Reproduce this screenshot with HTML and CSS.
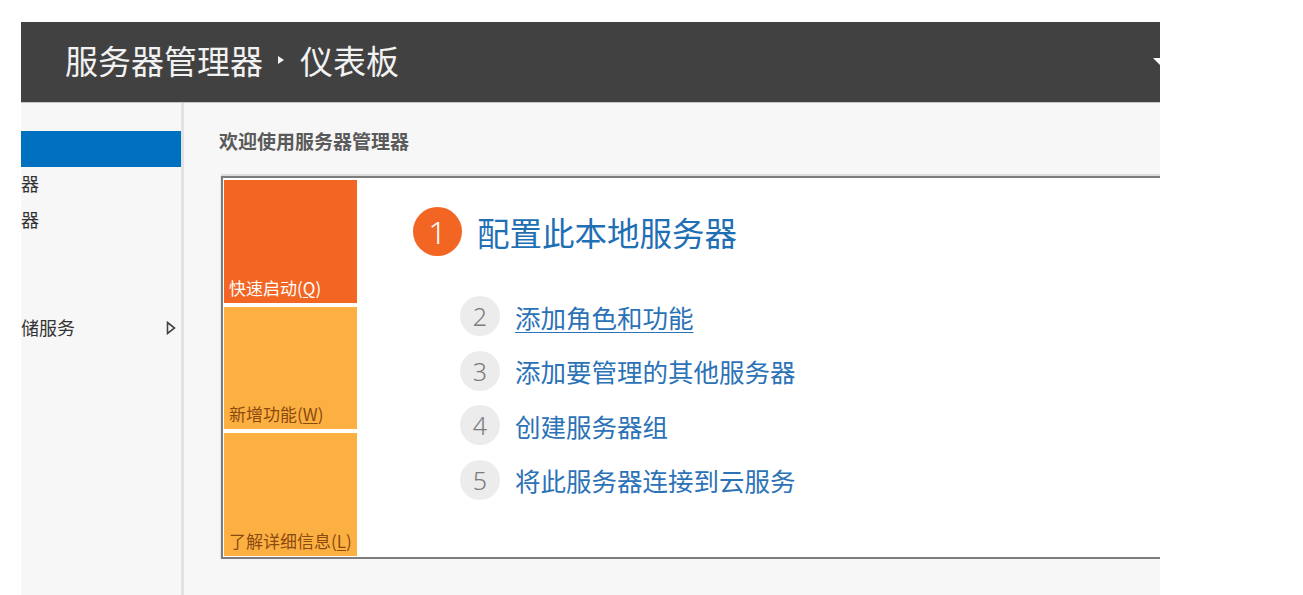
FILE: index.html
```html
<!DOCTYPE html>
<html lang="zh-CN">
<head>
    <meta charset="UTF-8">
    <meta name="viewport" content="width=device-width, initial-scale=1.0">
    <title>服务器管理器 - 仪表板</title>
    <link rel="stylesheet" href="styles.css">
</head>
<body>

<div class="app">
    <!-- Title bar -->
    <div class="header">
        <h1 class="title">
            服务器管理器
            <svg class="crumb-arrow" width="8" height="10" viewBox="0 0 8 10"><path d="M1 1 L7 5 L1 9 Z" fill="#f2f2f2"/></svg>
            仪表板
        </h1>
        <svg class="header-menu" width="14" height="8" viewBox="0 0 14 8"><path d="M0 0 L14 0 L7 7 Z" fill="#ffffff"/></svg>
    </div>

    <div class="body">
        <!-- Navigation -->
        <div class="sidebar">
            <ul class="nav">
                <li class="nav-item active">仪表板</li>
                <li class="nav-item">本地服务器</li>
                <li class="nav-item">所有服务器</li>
                <li class="nav-item">DNS</li>
                <li class="nav-item">IIS</li>
                <li class="nav-item">
                    文件和存储服务
                    <svg class="nav-arrow" width="10" height="14" viewBox="0 0 10 14"><path d="M1.5 1.5 L8.5 7 L1.5 12.5 Z" fill="none" stroke="#444" stroke-width="1.6"/></svg>
                </li>
            </ul>
        </div>

        <!-- Dashboard -->
        <div class="content">
            <h3 class="welcome">欢迎使用服务器管理器</h3>

            <div class="panel">
                <div class="tiles">
                    <div class="tile tile-start">快速启动(<u>Q</u>)</div>
                    <div class="tile tile-new">新增功能(<u>W</u>)</div>
                    <div class="tile tile-learn">了解详细信息(<u>L</u>)</div>
                </div>

                <div class="steps">
                    <div class="step-main">
                        <span class="num num-main">1</span>
                        <span class="step-title">配置此本地服务器</span>
                    </div>
                    <div class="sub-steps">
                        <div class="step">
                            <span class="num">2</span>
                            <a class="step-link underline">添加角色和功能</a>
                        </div>
                        <div class="step">
                            <span class="num">3</span>
                            <a class="step-link">添加要管理的其他服务器</a>
                        </div>
                        <div class="step">
                            <span class="num">4</span>
                            <a class="step-link">创建服务器组</a>
                        </div>
                        <div class="step">
                            <span class="num">5</span>
                            <a class="step-link">将此服务器连接到云服务</a>
                        </div>
                    </div>
                </div>
            </div>
        </div>
    </div>
</div>

</body>
</html>
```

FILE: styles.css
```css
/* Page */
body {
    margin: 0;
    background-color: #ffffff;
    font-family: "Noto Sans CJK SC", "Noto Sans", sans-serif;
}
.app {
    margin: 22px 0 0 21px;
    width: 1139px;
    height: 573px;
    overflow: hidden;
    display: flex;
    flex-direction: column;
}

/* Header */
.header {
    height: 80px;
    flex-shrink: 0;
    background-color: #414141;
    border-bottom: 1px solid #c4c4c4;
    display: flex;
    align-items: center;
    position: relative;
}
.title {
    margin: 0 0 4px 44px;
    color: #f2f2f2;
    font-size: 33px;
    font-weight: normal;
    display: flex;
    align-items: center;
}
.crumb-arrow {
    margin: 0 15px 0 14px;
}
.header-menu {
    position: absolute;
    right: -7px;
    top: 36px;
}

/* Body */
.body {
    flex: 1;
    display: flex;
    background-color: #f7f7f7;
}

/* Sidebar */
.sidebar {
    width: 160px;
    flex-shrink: 0;
    border-right: 3px solid #e2e2e2;
    overflow: hidden;
    padding-top: 28px;
}
.nav {
    list-style: none;
    margin: 0 0 0 -72px;
    padding: 0;
}
.nav-item {
    height: 36px;
    line-height: 32px;
    font-size: 18px;
    color: #333333;
    white-space: nowrap;
    position: relative;
}
.nav-item.active {
    background-color: #0070c0;
    color: #ffffff;
}
.nav-arrow {
    position: absolute;
    left: 217px;
    top: 10px;
}

/* Content */
.content {
    flex: 1;
    padding: 0 0 0 35px;
}
.welcome {
    margin: 0;
    padding-top: 24px;
    height: 49px;
    font-size: 19px;
    font-weight: bold;
    color: #5a5a5a;
}
.panel {
    margin-left: 2px;
    background-color: #ffffff;
    border: 2px solid #7c7c7c;
    border-right: none;
    box-shadow: 0 -2px 0 #dddddd, -1px 0 0 #e6e6e6;
    padding: 2px 0 1px 1px;
    display: flex;
    height: 376px;
}

/* Tiles */
.tiles {
    width: 133px;
    display: flex;
    flex-direction: column;
    gap: 4px;
}
.tile {
    height: 123px;
    box-sizing: border-box;
    padding: 0 0 3px 5px;
    display: flex;
    align-items: flex-end;
    font-size: 17px;
    color: #8a4a10;
}
.tile u {
    text-underline-offset: 2px;
}
.tile-start {
    background-color: #f26522;
    color: #ffffff;
}
.tile-new,
.tile-learn {
    background-color: #fdb042;
}

/* Steps */
.steps {
    padding: 27px 0 0 56px;
}
.step-main {
    display: flex;
    align-items: center;
    gap: 15px;
}
.num {
    width: 40px;
    height: 40px;
    border-radius: 50%;
    background-color: #ececec;
    color: #7b7b7b;
    font-family: "Noto Sans", "Open Sans", sans-serif;
    font-weight: 300;
    font-size: 25px;
    display: flex;
    align-items: center;
    justify-content: center;
    flex-shrink: 0;
}
.num-main {
    width: 49px;
    height: 49px;
    background-color: #f26522;
    color: #ffffff;
    font-size: 32px;
}
.step-title {
    font-size: 32.5px;
    color: #1f6fb5;
}
.sub-steps {
    margin-top: 40px;
    padding-left: 47px;
    display: flex;
    flex-direction: column;
    gap: 14.5px;
}
.step {
    display: flex;
    align-items: center;
    gap: 15px;
}
.step-link {
    font-size: 25.5px;
    color: #2b72b7;
    cursor: pointer;
}
.step-link.underline {
    text-decoration: underline;
    text-underline-offset: 4px;
    text-decoration-thickness: 1px;
}
```
